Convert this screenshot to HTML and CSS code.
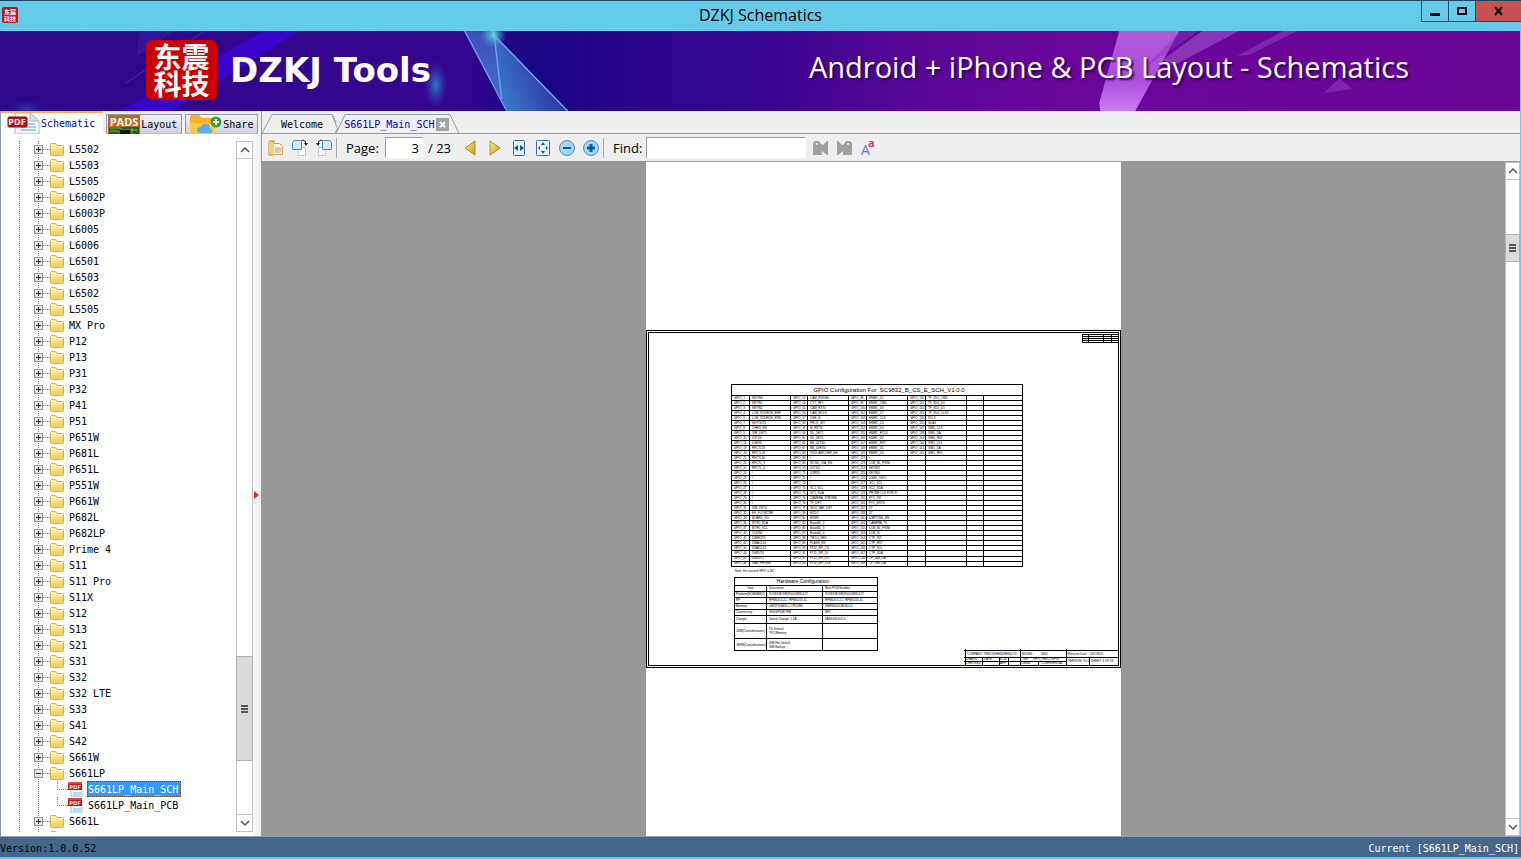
FILE: index.html
```
<!DOCTYPE html>
<html lang="en">
<head>
  <meta charset="UTF-8" />
  <meta name="viewport" content="width=device-width, initial-scale=1.0" />
  <title>DZKJ Schematics</title>
  <link rel="stylesheet" href="styles.css">
</head>

<body>
  <header class="titlebar">
    <div class="app-icon" aria-hidden="true"><span>东震</span><span>科技</span></div>
    <h1>DZKJ Schematics</h1>
    <div class="window-buttons">
      <button aria-label="Minimize"><svg width="10" height="10"><path d="M0 7h10v3H0z" /></svg></button>
      <button aria-label="Maximize"><svg width="10" height="10"><path d="M1 2h8v6H1z" fill="none" stroke="#000" stroke-width="2" /></svg></button>
      <button class="close" aria-label="Close"><svg width="10" height="10"><path d="M1 1l7 8M8 1L1 9" stroke="#000" stroke-width="2" /></svg></button>
    </div>
  </header>

  <div class="banner">
    <svg class="banner-art" viewBox="0 0 1521 80" preserveAspectRatio="none" aria-hidden="true">
      <defs>
        <linearGradient id="bg">
          <stop offset="0" stop-color="#2d088a" />
          <stop offset="0.3" stop-color="#35058e" />
          <stop offset="0.35" stop-color="#190784" />
          <stop offset="0.42" stop-color="#2b068b" />
          <stop offset="0.5" stop-color="#360590" />
          <stop offset="0.59" stop-color="#560796" />
          <stop offset="0.7" stop-color="#6b069b" />
          <stop offset="1" stop-color="#6b0596" />
        </linearGradient>
        <linearGradient id="blue" x1="0" y1="0" x2="0" y2="1">
          <stop offset="0" stop-color="#3d50b8" />
          <stop offset="1" stop-color="#3f74cc" />
        </linearGradient>
        <linearGradient id="blue2" x1="0" y1="1" x2="1" y2="0.6">
          <stop offset="0" stop-color="#3c84cf" />
          <stop offset="1" stop-color="#2a2a9b" />
        </linearGradient>
        <linearGradient id="pink" x1="0" y1="0" x2="0" y2="1">
          <stop offset="0" stop-color="#b45bd8" />
          <stop offset="0.6" stop-color="#ad4cd8" />
          <stop offset="1" stop-color="#ca7bf5" />
        </linearGradient>
        <radialGradient id="glow">
          <stop offset="0" stop-color="#2f7cc8" />
          <stop offset="1" stop-color="#2f3cb0" stop-opacity="0" />
        </radialGradient>
        <radialGradient id="spark">
          <stop offset="0" stop-color="#5fe0e0" />
          <stop offset="1" stop-color="#3f9ad0" stop-opacity="0" />
        </radialGradient>
      </defs>
      <rect width="1521" height="80" fill="url(#bg)" />
      <path d="M264 0h35L172 80h-52z" fill="#3c05e0" opacity="0.75" />
      <path d="M140 0h34L136 26z" fill="#4636c0" opacity="0.25" />
      <path d="M205 0L126 52" stroke="#5b55d0" opacity="0.5" />
      <ellipse cx="26" cy="78" rx="18" ry="9" fill="url(#glow)" opacity="0.4" />
      <ellipse cx="436" cy="54" rx="12" ry="24" fill="url(#glow)" />
      <path d="M465 0h30l7 68 6 12z" fill="url(#blue)" />
      <path d="M495 4l73 76h-62l-4-12z" fill="url(#blue2)" />
      <path d="M465 0l41 78M494 0l8 68M496 6l72 74" fill="none" stroke="#6da0f0" stroke-width="1.5" />
      <circle cx="494" cy="4" r="13" fill="url(#spark)" />
      <path d="M1120 0h60l-44 80h-35l-1-8z" fill="url(#pink)" />
      <path d="M1203 0h37l-65 34-12-5z" fill="#a45bd0" opacity="0.55" />
      <path d="M1181 0h18l-37 26-18 12z" fill="#8a35b8" opacity="0.45" />
      <path d="M1284 0h14l-48 24-12 1z" fill="#9446bf" opacity="0.5" />
      <path d="M1340 47l13 11-28 4z" fill="#8d38b8" opacity="0.6" />
    </svg>
    <div class="brand-logo"><span>东震</span><span>科技</span></div>
    <div class="brand-name">DZKJ Tools</div>
    <div class="brand-tagline">Android + iPhone &amp; PCB Layout - Schematics</div>
  </div>

  <!-- shared icons -->
  <svg class="sprite" aria-hidden="true">
    <linearGradient id="fold" x1="0" y1="0" x2="0" y2="1">
      <stop offset="0" stop-color="#fff3a6" />
      <stop offset="1" stop-color="#f0cd5c" />
    </linearGradient>
    <linearGradient id="gold" x1="0" y1="0" x2="1" y2="1">
      <stop offset="0" stop-color="#ffe993" />
      <stop offset="1" stop-color="#d19a17" />
    </linearGradient>
    <linearGradient id="ball" x1="0" y1="0" x2="0" y2="1">
      <stop offset="0" stop-color="#a8d4f2" />
      <stop offset="1" stop-color="#8fe0fb" />
    </linearGradient>
    <symbol id="folder" viewBox="0 0 14 13">
      <path d="M0.500 1.500q0-1 1-1h4l1.500 2h5.500q1 0 1 1v8q0 1-1 1h-11q-1 0-1-1z" fill="url(#fold)" stroke="#d6b04c" />
      <path d="M1 5h5l1-1.500h6" fill="none" stroke="#fff7c8" />
    </symbol>
    <symbol id="pdf" viewBox="0 0 16 16">
      <path d="M4 3h8l3 3v10H4z" fill="#e9f3fb" stroke="#a9c6dd" />
      <path d="M6 12h8M6 14h8" stroke="#8fc2e8" />
      <rect x="1" y="1" width="14" height="8" fill="#c4121a" />
      <path d="M1 1h14v2H1z" fill="#e0444a" />
      <text x="8" y="8" class="pdf-text" text-anchor="middle">PDF</text>
    </symbol>
  </svg>

  <main>
    <section class="sidebar">
      <nav class="side-tabs">
        <button class="active">
          <svg width="33" height="21" viewBox="0 0 33 21">
            <path d="M8 0h15l9 8v13H8z" fill="#f3f8fc" stroke="#a9bccb" />
            <path d="M23 0l9 8h-9z" fill="#d5e3ee" stroke="#a9bccb" />
            <path d="M14 11h14M14 14h15M14 17h15" stroke="#a5cdea" stroke-width="2" />
            <rect x="1" y="4" width="19" height="10" rx="1" fill="#bd1018" stroke="#8b0a10" />
            <text x="10" y="12" class="pdf-big" text-anchor="middle">PDF</text>
          </svg>
          Schematic
        </button>
        <button>
          <svg width="32" height="19" viewBox="0 0 32 19">
            <rect width="32" height="19" fill="#c4651a" />
            <path d="M1 12h30v7H1z" fill="#28591e" />
            <path d="M2 13h10l3 2h15M2 16h8l3 2M24 13v6" fill="none" stroke="#5dc23c" />
            <rect x="12" y="15" width="10" height="4" fill="#161616" />
            <text x="16" y="11" class="pads-text" text-anchor="middle">PADS</text>
          </svg>
          Layout
        </button>
        <button class="share">
          <svg width="32" height="19" viewBox="0 0 32 19">
            <path d="M0 2q0-2 2-2h7l3 3h11q2 0 2 2v14H0z" fill="#f7b22c" />
            <path d="M0 8h25v11H0z" fill="#ffc843" />
            <path d="M10 18q-3 0-3-3t4-3q2-5 6-3 3 1 3 4 3 1 2 5z" fill="#5aaef0" />
            <circle cx="26" cy="7" r="5.500" fill="#35a13b" />
            <path d="M26 4v6M23 7h6" stroke="#fff" stroke-width="2" />
          </svg>
          Share
        </button>
      </nav>
      <div class="tree-panel">
        <ul class="tree" id="tree"></ul>
        <div class="scrollbar tree-scroll">
          <button aria-label="Scroll up"><svg width="10" height="8"><path d="M1 6l4-4 4 4" /></svg></button>
          <div class="track"><div class="thumb"></div></div>
          <button aria-label="Scroll down"><svg width="10" height="8"><path d="M1 2l4 4 4-4" /></svg></button>
        </div>
        <div class="splitter"><svg width="5" height="8"><path d="M0 0l5 4-5 4z" fill="#e02a1a" /></svg></div>
      </div>
    </section>

    <section class="viewer">
      <nav class="doc-tabs">
        <svg class="tab-outline" width="200" height="23" aria-hidden="true">
          <path d="M0 22.500L10 3.500h60l4 8M76 16.500l-3 6" />
          <path d="M74 22.500L83 3.500h105l9 19h3" />
          <path d="M70 3.500l5 13" />
        </svg>
        <button>Welcome</button>
        <button class="active">S661LP_Main_SCH</button>
        <button class="tab-close" aria-label="Close tab"><svg width="13" height="13"><path d="M4 4l5 5M9 4L4 9" stroke="#fff" stroke-width="2" /></svg></button>
      </nav>

      <div class="toolbar">
        <button aria-label="Open"><svg width="16" height="16">
          <path d="M1 1h5v14H1z" fill="#e9b64d" stroke="#c78f2b" />
          <path d="M5.500 3.500h6l3 3v8h-9z" fill="#fffbe8" stroke="#c9a35a" />
          <path d="M7 8h6M7 10h6M7 12h6" stroke="#a4a08c" />
          <path d="M1 1l5 2v12l-5-1z" fill="#f5ce77" />
        </svg></button>
        <button aria-label="Rotate right"><svg width="16" height="18">
          <path d="M6.500 8.500h7v8h-7z" fill="#fff" stroke="#b9bcc4" stroke-dasharray="3 1" />
          <path d="M0.500 3.500l2-2h7v9h-9z" fill="#d3e8fb" stroke="#5a86bd" />
          <path d="M10 1q4 0 4 4" fill="none" stroke="#222" /><path d="M12 4h4l-2 3z" fill="#222" />
        </svg></button>
        <button aria-label="Rotate left"><svg width="16" height="18">
          <path d="M2.500 8.500h7v8h-7z" fill="#fff" stroke="#b9bcc4" stroke-dasharray="3 1" />
          <path d="M6.500 1.500h7l2 2v7h-9z" fill="#d3e8fb" stroke="#5a86bd" />
          <path d="M6 1q-4 0-4 4" fill="none" stroke="#222" /><path d="M0 4h4l-2 3z" fill="#222" />
        </svg></button>
        <span class="sep"></span>
        <label for="page" class="page-label">Page:</label>
        <input id="page" class="page-input" type="text" value="3" />
        <span class="page-total">/ 23</span>
        <button aria-label="Previous page"><svg width="12" height="16"><path d="M11 1v14L1 8z" fill="url(#gold)" stroke="#b98a1c" /></svg></button>
        <button aria-label="Next page" class="next"><svg width="12" height="16"><path d="M1 1v14l10-7z" fill="url(#gold)" stroke="#b98a1c" /></svg></button>
        <button aria-label="Fit width"><svg width="12" height="16">
          <rect x="0.500" y="0.500" width="11" height="15" rx="1" fill="#e4f3ff" stroke="#3a6aa8" />
          <path d="M5 5v6L1 8zM7 5v6l4-3z" fill="#14509e" />
        </svg></button>
        <button aria-label="Fit page"><svg width="14" height="16">
          <rect x="0.500" y="0.500" width="13" height="15" rx="1" fill="#e4f3ff" stroke="#3a6aa8" />
          <path d="M7 2l2 3H5zM7 14l2-3H5zM2 8l2-2v4zM12 8l-2-2v4z" fill="#14509e" />
        </svg></button>
        <button aria-label="Zoom out"><svg width="16" height="16">
          <circle cx="8" cy="8" r="7.500" fill="url(#ball)" stroke="#5f86ad" />
          <path d="M4 8h8" stroke="#0c57a6" stroke-width="2" />
        </svg></button>
        <button aria-label="Zoom in"><svg width="16" height="16">
          <circle cx="8" cy="8" r="7.500" fill="url(#ball)" stroke="#5f86ad" />
          <path d="M4 8h8M8 4v8" stroke="#0c57a6" stroke-width="3" />
        </svg></button>
        <span class="sep"></span>
        <label for="find" class="find-label">Find:</label>
        <input id="find" class="find-input" type="text" />
        <button aria-label="Find previous"><svg width="15" height="16"><path d="M0 3l2-2h4l2 3 2 1 4-4h1v14h-1l-5-4v4H0z" fill="#a0a0a0" /><circle cx="4" cy="4" r="1" fill="#eee" /></svg></button>
        <button aria-label="Find next"><svg width="15" height="16"><path d="M15 3l-2-2H9L7 4 5 5 1 1H0v14h1l5-4v4h9z" fill="#a0a0a0" /><circle cx="11" cy="4" r="1" fill="#eee" /></svg></button>
        <button aria-label="Match case"><svg width="16" height="18">
          <text x="1" y="16" class="case-big">A</text><text x="8" y="8" class="case-small">a</text>
        </svg></button>
      </div>

      <div class="canvas">
        <div class="pages">
          <article class="page">
            <div class="sheet">
              <svg class="revision" width="38" height="10" aria-hidden="true">
                <path d="M1 1h36v8H1zM1 3h36M1 5h36M1 7h36M7 1v8M22 1v8M30 1v8" />
              </svg>
              <table class="gpio">
                <colgroup><col class="w18"><col class="w41"><col class="w17"><col class="w41"><col class="w18"><col class="w41"><col class="w18"><col class="w41"><col class="w17"><col></colgroup>
                <thead><tr><th colspan="10">GPIO Configuration For&nbsp; SC9832_B_CS_E_SCH_V1.0.0</th></tr></thead>
                <tbody id="gpio"></tbody>
              </table>
              <p class="note">Note: the unused GPIO is NC</p>
              <table class="hardware">
                <colgroup><col class="w32"><col class="w56"><col></colgroup>
                <thead><tr><th colspan="3">Hardware Configuration</th></tr></thead>
                <tbody>
                  <tr><td class="mid">Item</td><td>Description</td><td>Main PCB Number</td></tr>
                  <tr><td>Platform(BOM/MMIC)</td><td>SC9832E/SR2850/UMS512T</td><td>SC9832E/SR2850/UMS512T</td></tr>
                  <tr><td>RF</td><td>RPM5013-21 / RPM5013-41</td><td>RPM5013-21 / RPM5013-41</td></tr>
                  <tr><td>Memory</td><td>eMCP 8GB/8+1 LPDDR3</td><td>KMFN60012M-B214</td></tr>
                  <tr><td>Connectivity</td><td>Wifi/GPS/BT/FM</td><td>NFC</td></tr>
                  <tr class="h8"><td>Charger</td><td>Switch Charger 1.5A</td><td>FAN54015UCX</td></tr>
                  <tr class="h15"><td>JEMI(Considerations)</td><td>TD-Default<br>TFC/Memory</td><td></td></tr>
                  <tr class="h12"><td>JEPM(Considerations)</td><td>SIM Hot Default<br>SIM Backup</td><td></td></tr>
                </tbody>
              </table>
              <svg class="title-block" width="155" height="17">
                <path d="M0 1h155M0 8h155M0 12h102M0 16h155M1 0v17M56 0v17M102 0v17M18 8v8M35 8v8M44 8v8M74 12v4M125 8v8" />
                <text x="3" y="6">COMPANY: TINNO(SHENZHEN)LTD</text>
                <text x="58" y="6">MODEL:</text><text x="77" y="6">S661</text>
                <text x="104" y="6">Revision Date:</text><text x="126" y="6">2017/8/21</text>
                <text x="2" y="11">DRAWN</text><text x="20" y="11">DATE</text><text x="36" y="11">PCB</text>
                <text x="2" y="15">CHECKED</text><text x="36" y="15">APP</text>
                <text x="58" y="11">Title:</text><text x="69" y="11">GPIO_HWCONFIG</text>
                <text x="57" y="15">Confid.</text><text x="77" y="15">CONFIDENTIAL</text>
                <text x="104" y="13">VERSION: V1.0</text><text x="127" y="13">SHEET: 3 OF 23</text>
              </svg>
            </div>
          </article>
        </div>
        <div class="scrollbar page-scroll">
          <button aria-label="Scroll up"><svg width="10" height="8"><path d="M1 6l4-4 4 4" /></svg></button>
          <div class="track"><div class="thumb"></div></div>
          <button aria-label="Scroll down"><svg width="10" height="8"><path d="M1 2l4 4 4-4" /></svg></button>
        </div>
      </div>
    </section>
  </main>

  <footer class="statusbar">
    <span>Version:1.0.0.52</span>
    <span>Current [S661LP_Main_SCH]</span>
  </footer>

  <script>
    const folders = ["L5502", "L5503", "L5505", "L6002P", "L6003P", "L6005", "L6006", "L6501", "L6503", "L6502", "L5505",
      "MX Pro", "P12", "P13", "P31", "P32", "P41", "P51", "P651W", "P681L", "P651L", "P551W", "P661W", "P682L", "P682LP",
      "Prime 4", "S11", "S11 Pro", "S11X", "S12", "S13", "S21", "S31", "S32", "S32 LTE", "S33", "S41", "S42", "S661W",
      "S661LP", "S661L", ""];
    const files = { "S661LP": ["S661LP_Main_SCH", "S661LP_Main_PCB"] };
    const selected = "S661LP_Main_SCH";

    document.getElementById("tree").innerHTML = folders.map(name => {
      const open = files[name];
      const children = (open || []).map(f => `
        <li class="file"><svg width="16" height="16"><use href="#pdf" /></svg><span class="${f === selected ? "selected" : ""}">${f}</span></li>`).join("");
      return `
        <li class="folder"><i class="toggle ${open ? "open" : ""}"></i><svg width="14" height="13"><use href="#folder" /></svg><span>${name}</span></li>${children}`;
    }).join("");

    // pin | net, four pairs per row
    const pins = `1|KEYIN0|53|CAM_PWDN0|98|EMMC_D1|130|TF_SD0_CMD
2|KEYIN1|54|CTO_RF1|99|EMMC_CMD|131|TF_SD0_D0
3|KEYIN2|55|CAM_RST0|100|EMMC_D0|132|TF_SD0_D1
4|LCM_SOURCE_ENP|56|CAM_MCLK|101|EMMC_D7|133|TF_SD0_CLK0
5|LCM_SOURCE_ENN|57|USB_ID|102|EMMC_CLK|134|SCL3
7|KEYOUT0|58|PROX_INT|103|EMMC_D3|135|SDA3
8|CHRG_EN|59|M_RSTN|104|EMMC_D4|137|SIM0_CLK
9|SIM_DET1|64|SD_DET1|105|EMMC_RCLK|138|SIM0_DA
10|U0TXD|65|SD_DET2|106|EMMC_D2|139|SIM0_RST
11|U0RXD|66|BB_U0TXD|107|EMMC_RST|140|SIM1_CLK
19|RFCTL18|67|BB_U0RXD|108|EMMC_D5|141|SIM1_DA
20|RFCTL19|68|VDDCAMCORE_EN|109|EMMC_D6|142|SIM1_RST
21|RFCTL20|69|/|121|/
22|RFCTL_3|69|WCN0_LNA_EN|123|LCM_BL_PWM
23|RFCTL_4|70|U1TXD|124|KEYIN3
24|/|71|U1RXD|125|KEYIN4
25|/|72|/|126|USB0_CNTL
26|/|73|/|127|SCL_SCL
27|/|74|SC1_SCL|128|SC2_SDA
28|/|75|SC1_SDA|129|PROBE CLK FOR 37
29|/|76|CAMERA_STROBE|130|FTO_INT
30|/|78|TF_DET|131|FTO_RSTN
31|SIM_DET0|79|SDIO_BAT_DET|132|37
32|FG_FLOWCNR|83|MTDO|138|37
33|BOARD_ID1|84|MTMS|140|U3RTCNG_EN
36|BTIF0_SDA|85|BoardID_2|141|CAMERA_TX
37|BTIF0_SCL|86|BoardID_3|142|LCM_BL_PWM
40|CLKIN2|87|BoardID_4|143|LCM_ID
41|DMIRQT0|88|TMCU_SRV|144|CTP_INT
42|DMACLK0|89|FLASH_EN|145|CTP_RST
43|DMACLK1|90|FTID_SPI_CS|146|CTP_SCL
44|DMIDIT0|91|FTID_SPI_DI|147|CTP_SDA
45|DMIDIT1|92|FTID_SPI_DO|148|TP_SIM_DA
46|DAB_PHONE|93|FTID_SPI_CLK|149|TP_SIM_DA`;

    document.getElementById("gpio").innerHTML = pins.split("\n").map(line => {
      const cells = line.split("|");
      let row = "";
      for (let i = 0; i < 10; i++) {
        const text = cells[i] || "";
        row += `<td>${text && i % 2 === 0 ? "GPIO_" + text : text}</td>`;
      }
      return `<tr>${row}</tr>`;
    }).join("");
  </script>
</body>
</html>
```
FILE: styles.css
```
:root {
  --sky: #66cae9;
  --chrome: #efefef;
  --line: #8e9dac;
  --canvas: #989898;
  --status: #44688c;
  --link: #0000d0;
  --mono: "DejaVu Sans Mono", "Liberation Mono", monospace;
  --ui: "Open Sans", "Noto Sans", sans-serif;
}

* {
  box-sizing: border-box;
}

body {
  margin: 0;
  height: 100vh;
  display: flex;
  flex-direction: column;
  overflow: hidden;
  background: var(--sky);
  font-family: var(--mono);
  font-size: 10px;
  color: #000;
}

button {
  margin: 0;
  padding: 0;
  border: 0;
  background: none;
  font: inherit;
  color: inherit;
  display: flex;
  align-items: center;
  justify-content: center;
}

svg {
  display: block;
  flex: none;
}

.sprite {
  position: absolute;
  width: 0;
  height: 0;
}

/* title bar */
.titlebar {
  position: relative;
  flex: none;
  display: flex;
  height: 31px;
  border-top: 1px solid #1b4560;
  background: var(--sky);
}

.titlebar h1 {
  flex: 1;
  margin: 0;
  padding-left: 82px;
  font: 16px/28px var(--ui);
  text-align: center;
}

.app-icon {
  display: flex;
  flex-direction: column;
  justify-content: center;
  width: 16px;
  height: 16px;
  margin: 6px 0 0 2px;
  border-radius: 2px;
  background: #c8101a;
  color: #fff;
  font: bold 6px/7px "Noto Sans CJK SC", sans-serif;
  text-align: center;
}

.window-buttons {
  display: flex;
  height: 21px;
  border: 1px solid #1c4a60;
  border-width: 0 0 1px 1px;
}

.window-buttons button {
  width: 27px;
  border-right: 1px solid #1c4a60;
}

.window-buttons .close {
  width: 45px;
  border-right: 0;
  background: #c75050;
}

/* banner */
.banner {
  position: relative;
  flex: none;
  display: flex;
  align-items: center;
  height: 80px;
  margin-right: 1px;
  padding: 0 111px 2px 146px;
  color: #fff;
  font-family: var(--ui);
}

.banner-art {
  position: absolute;
  left: 0;
  top: 0;
  width: 100%;
  height: 100%;
}

.brand-logo,
.brand-name,
.brand-tagline {
  position: relative;
  white-space: nowrap;
}

.brand-logo {
  display: flex;
  flex-direction: column;
  justify-content: center;
  width: 71px;
  height: 60px;
  border-radius: 6px;
  background: #cc0000;
  font: bold 28px/27px "Noto Sans CJK SC", sans-serif;
  text-align: center;
}

.brand-name {
  margin-left: 13px;
  font: bold 34px/40px "DejaVu Sans", sans-serif;
}

.brand-tagline {
  margin-left: auto;
  padding-bottom: 6px;
  font-size: 29px;
  line-height: 40px;
  text-shadow: 2px 2px 2px #2a0450;
}

/* main split */
main {
  flex: 1;
  display: flex;
  min-height: 0;
  margin-right: 1px;
  background: var(--chrome);
}

.sidebar {
  display: flex;
  flex-direction: column;
  width: 261px;
  border-left: 1px solid var(--line);
}

.side-tabs {
  flex: none;
  display: flex;
  align-items: flex-end;
  gap: 3px;
  height: 23px;
}

.side-tabs button {
  height: 20px;
  padding: 0 4px 0 1px;
  gap: 1px;
  justify-content: flex-start;
  border: 1px solid var(--line);
  border-bottom-color: #b9c1ca;
  background: linear-gradient(#f4f4f6, #cfcfe0);
}

.side-tabs .active {
  height: 23px;
  padding: 0 8px 0 6px;
  border: 0;
  border-top: 2px solid #f5b041;
  background: #fff;
  color: var(--link);
}

.side-tabs .share {
  padding-left: 4px;
}

.tree-panel {
  position: relative;
  flex: 1;
  display: flex;
  min-height: 0;
  padding: 7px 8px 4px 0;
  background: linear-gradient(to left, #ebedf0, #fafafa 8px, #fff 9px);
}

.tree {
  position: relative;
  flex: 1;
  margin: 0;
  padding: 0;
  list-style: none;
  overflow: hidden;
}

/* dotted guides of the two open levels */
.tree::before,
.tree::after {
  content: "";
  position: absolute;
  top: 0;
  bottom: 0;
  left: 18px;
  border-left: 1px dotted #777;
}

.tree::after {
  left: 37px;
}

.tree li {
  display: flex;
  align-items: center;
  height: 16px;
  white-space: pre;
}

.folder {
  padding-left: 33px;
}

.folder svg {
  margin: 0 5px 0 0;
}

.toggle {
  position: relative;
  z-index: 1;
  width: 9px;
  height: 9px;
  margin-right: 7px;
  border: 1px solid #969696;
  background:
    linear-gradient(#222, #222) center / 5px 1px no-repeat,
    linear-gradient(#222, #222) center / 1px 5px no-repeat,
    #e4e4e4;
}

.toggle.open {
  background: linear-gradient(#222, #222) center / 5px 1px no-repeat, #e4e4e4;
}

.toggle::after {
  content: "";
  position: absolute;
  left: 8px;
  top: 3px;
  width: 7px;
  border-top: 1px dotted #777;
}

.file {
  position: relative;
  padding-left: 66px;
}

.file::before {
  content: "";
  position: absolute;
  left: 56px;
  top: 0;
  width: 10px;
  height: 8px;
  border: 1px dotted #777;
  border-width: 0 0 1px 1px;
}

.file span {
  margin-left: 4px;
  padding: 1px 1px 0;
  line-height: 15px;
}

.file .selected {
  padding-right: 3px;
  background: #3399ff;
  color: #fff;
  outline: 1px dotted #6b4a10;
  outline-offset: -1px;
}

.pdf-text,
.pdf-big,
.pads-text {
  font-family: "Open Sans", sans-serif;
  font-weight: bold;
  font-size: 6px;
  fill: #fff;
}

.pdf-big {
  font-size: 9px;
}

.pads-text {
  font-size: 11px;
}

.splitter {
  position: absolute;
  right: 2px;
  top: 357px;
}

/* scroll bars */
.scrollbar {
  flex: none;
  display: flex;
  flex-direction: column;
  width: 17px;
  border: 1px solid #c4c4c4;
  background: #fff;
}

.scrollbar button {
  height: 16px;
}

.scrollbar button path {
  fill: none;
  stroke: #555;
  stroke-width: 1.5;
}

.track {
  flex: 1;
  display: flex;
  flex-direction: column;
  border: 1px solid #c4c4c4;
  border-width: 1px 0;
}

.thumb {
  margin: 0 -1px;
  border: 1px solid #b0b0b0;
  background:
    repeating-linear-gradient(#555 0 2px, transparent 2px 3px) center / 7px 8px no-repeat,
    #dadada;
}

.tree-scroll .thumb {
  height: 105px;
  margin-top: 497px;
}

.page-scroll {
  width: 15px;
}

.page-scroll .thumb {
  height: 28px;
  margin-top: 54px;
}

/* document tabs */
.viewer {
  flex: 1;
  display: flex;
  flex-direction: column;
  min-width: 0;
  border-left: 1px solid var(--line);
}

.doc-tabs {
  position: relative;
  flex: none;
  display: flex;
  align-items: center;
  height: 23px;
  padding: 4px 0 0 19px;
  border-bottom: 1px solid var(--line);
}

.tab-outline {
  position: absolute;
  left: 0;
  top: 0;
  fill: none;
  stroke: var(--line);
}

.doc-tabs button {
  position: relative;
}

.doc-tabs .active {
  margin-left: 21px;
  color: var(--link);
}

.doc-tabs .tab-close {
  margin-left: 2px;
  background: #a3a3a3;
}

/* toolbar */
.toolbar {
  flex: none;
  display: flex;
  align-items: center;
  height: 28px;
  padding-left: 2px;
  border-bottom: 1px solid #999;
  font: 13px/20px var(--ui);
}

.toolbar button {
  flex: none;
  width: 24px;
  height: 24px;
}

.toolbar .next {
  margin-left: 1px;
}

.sep {
  width: 1px;
  height: 20px;
  background: #a8a8a8;
}

.page-label {
  width: 48px;
  padding-left: 9px;
}

.find-label {
  width: 42px;
  padding-left: 9px;
}

.toolbar input {
  height: 21px;
  margin: 0;
  padding: 0 3px;
  border: 1px solid #fff;
  border-color: #9a9a9a #fff #fff #9a9a9a;
  background: #fff;
  font: inherit;
  outline: 0;
}

.toolbar .page-input {
  width: 38px;
  text-align: right;
}

.toolbar .find-input {
  width: 160px;
  margin-right: 2px;
}

.page-total {
  width: 35px;
  padding-left: 5px;
}

.case-big {
  font: 14px "Open Sans", sans-serif;
  fill: #7b68ee;
}

.case-small {
  font: bold 11px "Open Sans", sans-serif;
  fill: #c0358f;
}

/* document */
.canvas {
  flex: 1;
  display: flex;
  min-height: 0;
}

.pages {
  flex: 1;
  display: flex;
  justify-content: center;
  background: var(--canvas);
  overflow: hidden;
}

.page {
  width: 475px;
  padding-top: 168px;
  background: #fff;
  font-family: "Liberation Sans", sans-serif;
}

.sheet {
  position: relative;
  display: flex;
  flex-direction: column;
  height: 338px;
  border: 1px solid #000;
  outline: 1px solid #000;
  outline-offset: -3px;
}

.revision {
  align-self: flex-end;
  margin: 2px 1px 0 0;
}

.revision path,
.title-block path {
  fill: none;
  stroke: #000;
  shape-rendering: crispEdges;
}

.sheet table {
  flex: none;
  table-layout: fixed;
  border-collapse: collapse;
  font-size: 3px;
  line-height: 3px;
}

.sheet td,
.sheet th {
  padding: 0 2px;
  border: 1px solid #000;
  font-weight: normal;
  white-space: nowrap;
  text-align: left;
}

.sheet th {
  padding: 1px 0 0 24px;
  font-size: 6px;
  line-height: 9px;
  text-align: center;
}

.gpio {
  width: 292px;
  height: 183px;
  margin: 41px 0 0 84px;
}

.w17 { width: 17px; }
.w18 { width: 18px; }
.w32 { width: 32px; }
.w41 { width: 41px; }
.w56 { width: 56px; }

.note {
  margin: 3px 0 4px 88px;
  font-size: 3px;
  line-height: 3px;
}

.sheet .hardware {
  width: 144px;
  margin-left: 87px;
}

.sheet .hardware th {
  padding: 0 6px 0 0;
  font-size: 5px;
  line-height: 7px;
}

.hardware td {
  height: 6px;
}

.hardware td:first-child {
  padding: 0 1px;
}

.hardware .mid {
  text-align: center;
}

.hardware .h8 td {
  height: 8px;
}

.hardware .h15 td {
  height: 15px;
  line-height: 4px;
}

.hardware .h12 td {
  height: 12px;
  line-height: 4px;
}

/* drawing stamp in the corner of the sheet */
.title-block {
  position: absolute;
  right: 1px;
  bottom: 1px;
  font-size: 3px;
}

/* status bar */
.statusbar {
  flex: none;
  display: flex;
  justify-content: space-between;
  height: 23px;
  padding: 5px 2px 0 0;
  border-top: 1px solid var(--line);
  border-bottom: 2px solid var(--sky);
  background: var(--status);
  line-height: 14px;
}

.statusbar span:last-child {
  color: #fff;
}
```
